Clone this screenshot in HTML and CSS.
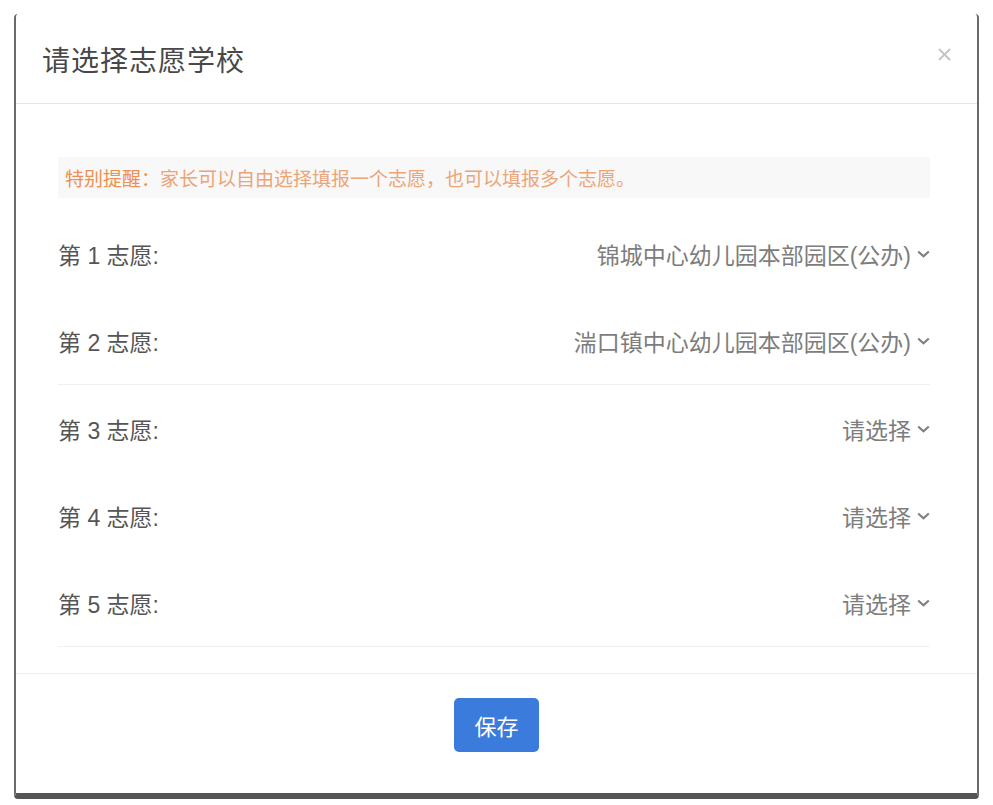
FILE: index.html
```html
<!DOCTYPE html>
<html lang="zh-CN">
<head>
    <meta charset="UTF-8">
    <meta name="viewport" content="width=device-width, initial-scale=1.0">
    <title>请选择志愿学校</title>
    <link rel="stylesheet" href="styles.css">
</head>
<body>
    <div class="modal">
        <div class="modal-header">
            <h2 class="modal-title">请选择志愿学校</h2>
            <span class="modal-close">
                <svg width="15" height="15" viewBox="0 0 15 15">
                    <line x1="2" y1="2" x2="13" y2="13" stroke="#c4c4c4" stroke-width="2"/>
                    <line x1="13" y1="2" x2="2" y2="13" stroke="#c4c4c4" stroke-width="2"/>
                </svg>
            </span>
        </div>

        <div class="modal-body">
            <div class="notice"><span class="notice-key">特别提醒：</span>家长可以自由选择填报一个志愿，也可以填报多个志愿。</div>

            <div class="group">
                <div class="choice-row">
                    <span class="choice-label">第 1 志愿:</span>
                    <span class="choice-value">锦城中心幼儿园本部园区(公办)
                        <svg class="chevron" width="13" height="8" viewBox="0 0 13 8"><polyline points="1.2,1.5 6.5,6.3 11.8,1.5" fill="none" stroke="#808080" stroke-width="2.2"/></svg>
                    </span>
                </div>
                <div class="choice-row">
                    <span class="choice-label">第 2 志愿:</span>
                    <span class="choice-value">湍口镇中心幼儿园本部园区(公办)
                        <svg class="chevron" width="13" height="8" viewBox="0 0 13 8"><polyline points="1.2,1.5 6.5,6.3 11.8,1.5" fill="none" stroke="#808080" stroke-width="2.2"/></svg>
                    </span>
                </div>
            </div>

            <div class="group">
                <div class="choice-row">
                    <span class="choice-label">第 3 志愿:</span>
                    <span class="choice-value">请选择
                        <svg class="chevron" width="13" height="8" viewBox="0 0 13 8"><polyline points="1.2,1.5 6.5,6.3 11.8,1.5" fill="none" stroke="#808080" stroke-width="2.2"/></svg>
                    </span>
                </div>
                <div class="choice-row">
                    <span class="choice-label">第 4 志愿:</span>
                    <span class="choice-value">请选择
                        <svg class="chevron" width="13" height="8" viewBox="0 0 13 8"><polyline points="1.2,1.5 6.5,6.3 11.8,1.5" fill="none" stroke="#808080" stroke-width="2.2"/></svg>
                    </span>
                </div>
                <div class="choice-row">
                    <span class="choice-label">第 5 志愿:</span>
                    <span class="choice-value">请选择
                        <svg class="chevron" width="13" height="8" viewBox="0 0 13 8"><polyline points="1.2,1.5 6.5,6.3 11.8,1.5" fill="none" stroke="#808080" stroke-width="2.2"/></svg>
                    </span>
                </div>
            </div>
        </div>

        <div class="modal-footer">
            <button class="save-btn">保存</button>
        </div>
    </div>
</body>
</html>
```

FILE: styles.css
```css
body {
    margin: 0;
    padding: 14px 14px 0 14px;
    background: #ffffff;
    font-family: 'Liberation Sans', 'Noto Sans CJK SC', sans-serif;
    color: #444;
}

.modal {
    width: 965px;
    box-sizing: border-box;
    background: #fff;
    border-left: 2px solid #6a6a6a;
    border-right: 2px solid #6a6a6a;
    border-bottom: 6px solid #555;
    border-radius: 4px;
}

.modal-header {
    height: 89px;
    display: flex;
    align-items: center;
    justify-content: space-between;
    padding: 0 25px 0 26px;
    border-bottom: 1px solid #e6e6e6;
}

.modal-title {
    margin: 0;
    font-size: 28px;
    font-weight: normal;
    letter-spacing: 1px;
    color: #484848;
}

.modal-close {
    display: flex;
    margin-top: -8px;
}

.modal-body {
    padding: 53px 47px 26px 42px;
}

.notice {
    height: 41px;
    display: flex;
    align-items: center;
    padding-left: 7px;
    background: #f8f8f8;
    font-size: 19px;
    color: #eba577;
    white-space: nowrap;
    margin-bottom: 12px;
}

.notice-key {
    color: #ec9150;
}

.group {
    border-bottom: 1px solid #f0f0f0;
}

.choice-row {
    height: 87px;
    display: flex;
    align-items: center;
    justify-content: space-between;
    font-size: 23px;
}

.choice-label {
    color: #555;
}

.choice-value {
    display: flex;
    align-items: center;
    gap: 6px;
    color: #7d7d7d;
}

.chevron {
    margin-top: 1px;
}

.modal-footer {
    border-top: 1px solid #eeeeee;
    padding: 24px 0 41px;
    display: flex;
    justify-content: center;
}

.save-btn {
    width: 85px;
    height: 54px;
    border: none;
    border-radius: 5px;
    background: #3a7bdc;
    color: #fff;
    font-family: 'Liberation Sans', 'Noto Sans CJK SC', sans-serif;
    font-size: 22px;
    cursor: pointer;
}
```
